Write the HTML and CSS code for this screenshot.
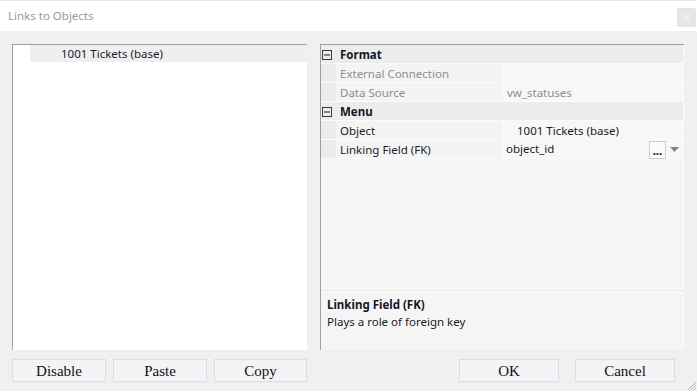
FILE: index.html
```html
<!DOCTYPE html>
<html>
<head>
<meta charset="utf-8">
<link rel="stylesheet" href="styles.css">
</head>
<body>
<div class="window">
  <div class="titlebar">
    <span class="title">Links to Objects</span>
    <span class="close"><svg width="7" height="7" viewBox="0 0 7 7"><path d="M0.5 0.5L6.5 6.5M6.5 0.5L0.5 6.5" stroke="#f6f6f6" stroke-width="1.2"/></svg></span>
  </div>
  <div class="content">
    <div class="tree">
      <div class="tree-row">1001 Tickets (base)</div>
    </div>
    <div class="props">
      <div class="grid">
        <div class="cat">
          <span class="gutter"><svg class="toggle" width="10" height="10" viewBox="0 0 10 10"><rect x="0.5" y="0.5" width="9" height="9" fill="none" stroke="#3a3a3a"/><path d="M2 5H8" stroke="#1a1a1a"/></svg></span>
          <span class="cat-label">Format</span>
        </div>
        <div class="prop disabled">
          <span class="gutter"></span><span class="label">External Connection</span><span class="value"></span>
        </div>
        <div class="prop disabled">
          <span class="gutter"></span><span class="label">Data Source</span><span class="value">vw_statuses</span>
        </div>
        <div class="cat">
          <span class="gutter"><svg class="toggle" width="10" height="10" viewBox="0 0 10 10"><rect x="0.5" y="0.5" width="9" height="9" fill="none" stroke="#3a3a3a"/><path d="M2 5H8" stroke="#1a1a1a"/></svg></span>
          <span class="cat-label">Menu</span>
        </div>
        <div class="prop">
          <span class="gutter"></span><span class="label">Object</span><span class="value indent">1001 Tickets (base)</span>
        </div>
        <div class="prop">
          <span class="gutter"></span><span class="label">Linking Field (FK)</span>
          <span class="value editor">
            <span class="edit-text">object_id</span>
            <span class="ellipsis">...</span>
            <svg class="drop" width="9" height="5" viewBox="0 0 9 5"><path d="M0 0H9L4.5 5Z" fill="#858585"/></svg>
          </span>
        </div>
      </div>
      <div class="desc">
        <div class="desc-title">Linking Field (FK)</div>
        <div class="desc-text">Plays a role of foreign key</div>
      </div>
    </div>
    <div class="btns-left">
      <button class="btn">Disable</button>
      <button class="btn">Paste</button>
      <button class="btn narrow">Copy</button>
    </div>
    <div class="btns-right">
      <button class="btn wide">OK</button>
      <button class="btn wide">Cancel</button>
    </div>
  </div>
  <svg class="grip" width="12" height="12" viewBox="0 0 12 12"><path d="M11 3L3 11M11 6L6 11M11 9L9 11" stroke="#b4b4b4" stroke-width="1"/></svg>
</div>
</body>
</html>
```

FILE: styles.css
```css
* { box-sizing: border-box; }
html, body { margin: 0; padding: 0; }
body {
  width: 697px;
  height: 391px;
  overflow: hidden;
  background: #f0f0f0;
  font-family: "Noto Sans", "Open Sans", sans-serif;
  font-size: 11.5px;
  color: #1a1a2a;
}
.window {
  position: relative;
  width: 697px;
  height: 391px;
}
.titlebar {
  height: 31px;
  background: #fff;
  border-top: 1px solid #e6e6e6;
  display: flex;
  align-items: flex-start;
  padding-left: 8px;
}
.title {
  color: #9a9a9a;
  line-height: 16px;
  margin-top: 7px;
}
.close {
  margin-left: auto;
  margin-top: 7px;
  margin-right: 1px;
  width: 19px;
  height: 19px;
  background: #e5e5e5;
  display: flex;
  align-items: center;
  justify-content: center;
}
.content {
  display: grid;
  grid-template-columns: 295px 364px;
  grid-template-rows: 306px 23px;
  column-gap: 13px;
  row-gap: 9px;
  padding: 13px 0 0 12px;
}
.tree {
  background: #fff;
  border-left: 1px solid #a0a0a0;
  border-top: 1px solid #a0a0a0;
}
.tree-row {
  margin-left: 17px;
  height: 17px;
  line-height: 18px;
  background: #efefef;
  padding-left: 31px;
  color: #1b1b30;
}
.props {
  display: flex;
  flex-direction: column;
  border-left: 1px solid #a0a0a0;
  border-top: 1px solid #a0a0a0;
  background: #f0f0f0;
}
.grid {
  height: 244px;
  background: #f5f5f5;
  border-right: 1px solid #fbfbfb;
  border-bottom: 1px solid #fbfbfb;
}
.cat, .prop {
  display: flex;
  height: 19px;
  border-bottom: 1px solid #fbfbfb;
  line-height: 20px;
}
.cat {
  background: #ececec;
}
.gutter {
  width: 15px;
  flex: none;
  background: #ececec;
  display: flex;
  align-items: center;
}
.toggle { margin-left: 1px; margin-top: 2px; }
.cat-label {
  font-weight: bold;
  padding-left: 4px;
  color: #16162a;
}
.label {
  width: 168px;
  flex: none;
  background: #f4f4f4;
  border-right: 1px solid #fbfbfb;
  padding-left: 4px;
  white-space: nowrap;
  overflow: hidden;
}
.value {
  flex: 1;
  background: #f7f7f7;
  padding-left: 3px;
  white-space: nowrap;
}
.value.indent { padding-left: 13px; }
.disabled .label, .disabled .value { color: #8e8e8e; }
.editor {
  display: flex;
  align-items: center;
  padding-left: 2px;
}
.edit-text { flex: 1; }
.ellipsis {
  width: 17px;
  height: 18px;
  margin-top: 1px;
  border: 1px solid #cbcbd6;
  background: #fbfbfb;
  font-weight: bold;
  line-height: 18px;
  text-align: center;
  color: #111;
  margin-right: 4px;
}
.drop { margin-right: 4px; }
.desc {
  margin-top: 3px;
  flex: 1;
  background: #f5f5f5;
  border-top: 1px solid #fbfbfb;
  border-right: 1px solid #fbfbfb;
  padding: 3px 6px 0 6px;
  line-height: 17px;
}
.desc-title { font-weight: bold; color: #16162a; }
.btns-left {
  display: flex;
  gap: 7px;
}
.btns-right {
  display: flex;
  justify-content: flex-end;
  gap: 16px;
  padding-right: 9px;
}
.btn {
  width: 94px;
  height: 23px;
  margin: 0;
  padding: 0;
  background: #f4f4f6;
  border: 1px solid #dcdce6;
  font-family: "Liberation Serif", serif;
  font-size: 15px;
  color: #111;
  line-height: 20px;
}
.btn.narrow { width: 93px; }
.btn.wide { width: 100px; }
.grip {
  position: absolute;
  right: 0;
  bottom: 0;
}
```
